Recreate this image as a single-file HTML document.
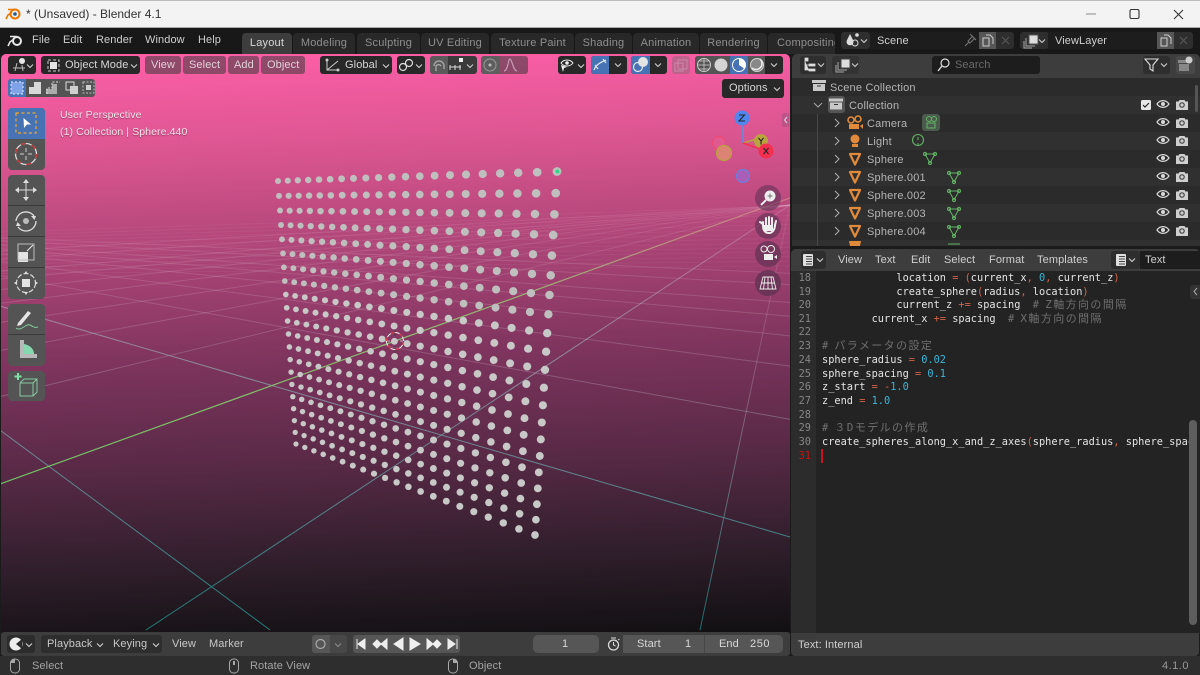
<!DOCTYPE html>
<html><head><meta charset="utf-8"><style>
*{box-sizing:border-box}
html,body{margin:0;padding:0}
body{width:1200px;height:675px;overflow:hidden;position:relative;background:#1b1b1b;font-family:"Liberation Sans","Noto Sans CJK JP",sans-serif;font-size:11px;color:#d0d0d0}
.b{position:absolute}
.t{position:absolute;white-space:nowrap;line-height:14px;letter-spacing:.1px}
.h{background:#282828;border-radius:3px;position:absolute}
.m{background:rgba(56,56,56,.55);border-radius:3px;position:absolute}
.tab{position:absolute;top:33px;height:21px;background:#282828;border-radius:4px 4px 0 0;color:#8f8f8f;line-height:20px;text-align:center;white-space:nowrap;overflow:hidden;letter-spacing:.2px}
.code{position:absolute;left:822px;font-family:"DejaVu Sans Mono","Noto Sans CJK JP",monospace;font-size:10.3px;line-height:14px;white-space:pre;color:#e4e4e4}
.n{position:absolute;left:791px;width:20px;text-align:right;font-family:"DejaVu Sans Mono",monospace;font-size:10.3px;line-height:14px;color:#858585}
.o{color:#d0634a}.v{color:#3cb4d8}.c{color:#6f6f6f}
.j{font-size:11px;letter-spacing:1.4px}
.ot{position:absolute;font-size:11px;line-height:14px;color:#b4b4b4;white-space:nowrap;letter-spacing:.2px}
.tool{position:absolute;left:8px;width:37px;background:#545454;border-radius:4px}
</style></head><body>

<!-- title bar -->
<div class="b" style="left:0;top:0;width:1200px;height:28px;background:#f3f3f3;border-top:1px solid #bdbdbd;border-bottom:1px solid #aaa"></div>
<div class="t" style="left:26px;top:7px;color:#333;font-size:12px;letter-spacing:0">* (Unsaved) - Blender 4.1</div>

<!-- top bar -->
<div class="b" style="left:0;top:28px;width:1200px;height:27px;background:#181818"></div>
<div class="t" style="left:32px;top:33px;color:#cfcfcf">File</div>
<div class="t" style="left:63px;top:33px;color:#cfcfcf">Edit</div>
<div class="t" style="left:96px;top:33px;color:#cfcfcf">Render</div>
<div class="t" style="left:145px;top:33px;color:#cfcfcf">Window</div>
<div class="t" style="left:198px;top:33px;color:#cfcfcf">Help</div>
<div class="tab" style="left:242px;width:50px;background:#3d3d3d;color:#d8d8d8">Layout</div>
<div class="tab" style="left:293px;width:62px">Modeling</div>
<div class="tab" style="left:357px;width:63px">Sculpting</div>
<div class="tab" style="left:421px;width:68px">UV Editing</div>
<div class="tab" style="left:491px;width:83px">Texture Paint</div>
<div class="tab" style="left:575px;width:57px">Shading</div>
<div class="tab" style="left:633px;width:66px">Animation</div>
<div class="tab" style="left:700px;width:67px">Rendering</div>
<div class="tab" style="left:768px;width:67px;text-align:left;padding-left:9px">Compositing</div>

<div class="h" style="left:841px;top:32px;width:29px;height:17px;background:#2e2e2e"></div>
<div class="b" style="left:870px;top:32px;width:109px;height:17px;background:#1d1d1d"></div>
<div class="b" style="left:979px;top:32px;width:17px;height:17px;background:#565656"></div>
<div class="b" style="left:996px;top:32px;width:18px;height:17px;background:#2e2e2e;border-radius:0 3px 3px 0"></div>
<div class="t" style="left:877px;top:34px;color:#d0d0d0">Scene</div>
<div class="h" style="left:1020px;top:32px;width:29px;height:17px;background:#2e2e2e"></div>
<div class="b" style="left:1048px;top:32px;width:109px;height:17px;background:#1d1d1d"></div>
<div class="b" style="left:1157px;top:32px;width:17px;height:17px;background:#565656"></div>
<div class="b" style="left:1174px;top:32px;width:19px;height:17px;background:#2e2e2e;border-radius:0 3px 3px 0"></div>
<div class="t" style="left:1055px;top:34px;color:#d0d0d0">ViewLayer</div>

<!-- 3D viewport -->
<div class="b" style="left:1px;top:54px;width:789px;height:578px;border-radius:5px 5px 0 0;overflow:hidden;background:linear-gradient(178deg,#ff5fa9 0%,#d9558f 18%,#80355f 51%,#5a2a47 68.5%,#2f1e2b 86%,#111012 100%)"></div>
<svg id="vp" class="b" style="left:0;top:0" width="1200" height="675" viewBox="0 0 1200 675">
<defs>
<clipPath id="vc"><rect x="1" y="54" width="789" height="578"/></clipPath>
<linearGradient id="lg" gradientUnits="userSpaceOnUse" x1="0" y1="210" x2="0" y2="632"><stop offset="0" stop-color="#fff" stop-opacity=".07"/><stop offset=".35" stop-color="#e4dde2" stop-opacity=".2"/><stop offset="1" stop-color="#1f8080" stop-opacity=".8"/></linearGradient>
<linearGradient id="tg" gradientUnits="userSpaceOnUse" x1="0" y1="210" x2="0" y2="632"><stop offset="0" stop-color="#d8b8cc" stop-opacity=".3"/><stop offset=".4" stop-color="#8a9aa5" stop-opacity=".85"/><stop offset="1" stop-color="#1f7c7c"/></linearGradient>
<linearGradient id="gg" gradientUnits="userSpaceOnUse" x1="790" y1="198" x2="0" y2="484"><stop offset="0" stop-color="#e0b090" stop-opacity=".45"/><stop offset=".35" stop-color="#96bd72" stop-opacity=".95"/><stop offset="1" stop-color="#72c466"/></linearGradient>
</defs>
<g id="grid" clip-path="url(#vc)"></g>
<g id="dots" clip-path="url(#vc)"></g>
</svg>

<!-- viewport header -->
<div class="h" style="left:8px;top:56px;width:28px;height:18px"></div>
<div class="h" style="left:41px;top:56px;width:99px;height:18px"></div>
<div class="t" style="left:65px;top:58px;color:#d6d6d6">Object Mode</div>
<div class="m" style="left:145px;top:56px;width:36px;height:18px"></div><div class="t" style="left:151px;top:58px;color:#e0d0d8">View</div>
<div class="m" style="left:183px;top:56px;width:43px;height:18px"></div><div class="t" style="left:189px;top:58px;color:#e0d0d8">Select</div>
<div class="m" style="left:228px;top:56px;width:31px;height:18px"></div><div class="t" style="left:234px;top:58px;color:#e0d0d8">Add</div>
<div class="m" style="left:261px;top:56px;width:44px;height:18px"></div><div class="t" style="left:267px;top:58px;color:#e0d0d8">Object</div>
<div class="h" style="left:320px;top:56px;width:72px;height:18px"></div>
<div class="t" style="left:345px;top:58px;color:#d6d6d6">Global</div>
<div class="h" style="left:397px;top:56px;width:28px;height:18px"></div>
<div class="h" style="left:430px;top:56px;width:47px;height:18px;background:#3a3a3a"></div>
<div class="h" style="left:430px;top:56px;width:18px;height:18px;background:#5a5a5a;border-radius:3px 0 0 3px"></div>
<div class="m" style="left:481px;top:56px;width:47px;height:18px"></div>
<div class="h" style="left:481px;top:56px;width:19px;height:18px;background:#5e5e5e;border-radius:3px 0 0 3px"></div>
<div class="h" style="left:558px;top:56px;width:28px;height:18px"></div>
<div class="h" style="left:591px;top:56px;width:36px;height:18px"></div>
<div class="h" style="left:591px;top:56px;width:18px;height:18px;background:#4772b3;border-radius:3px 0 0 3px"></div>
<div class="h" style="left:631px;top:56px;width:36px;height:18px"></div>
<div class="h" style="left:631px;top:56px;width:19px;height:18px;background:#4772b3;border-radius:3px 0 0 3px"></div>
<div class="m" style="left:672px;top:56px;width:18px;height:18px;background:rgba(110,110,110,.4)"></div>
<div class="h" style="left:695px;top:56px;width:88px;height:18px"></div>
<div class="h" style="left:695px;top:56px;width:70px;height:18px;background:#555;border-radius:3px 0 0 3px"></div>
<div class="b" style="left:730px;top:56px;width:18px;height:18px;background:#4772b3"></div>
<div class="h" style="left:722px;top:79px;width:62px;height:19px"></div>
<div class="t" style="left:729px;top:81px;color:#d6d6d6">Options</div>

<!-- select mode row -->
<div class="h" style="left:8px;top:79px;width:87px;height:18px;background:#545454"></div>
<div class="h" style="left:8px;top:79px;width:18px;height:18px;background:#4772b3;border-radius:3px 0 0 3px"></div>

<div class="t" style="left:60px;top:108px;color:#f2e4ea;font-size:10.5px;text-shadow:0 1px 1px rgba(0,0,0,.35)">User Perspective</div>
<div class="t" style="left:60px;top:125px;color:#f2e4ea;font-size:10.5px;text-shadow:0 1px 1px rgba(0,0,0,.35)">(1) Collection | Sphere.440</div>

<!-- toolbar -->
<div class="tool" style="top:108px;height:62px"></div>
<div class="b" style="left:8px;top:108px;width:37px;height:31px;background:#4772b3;border-radius:4px 4px 0 0"></div>
<div class="tool" style="top:175px;height:124px"></div>
<div class="tool" style="top:304px;height:62px"></div>
<div class="tool" style="top:371px;height:30px"></div>
<div class="b" style="left:8px;top:205px;width:37px;height:1px;background:#3a3a3a"></div>
<div class="b" style="left:8px;top:236px;width:37px;height:1px;background:#3a3a3a"></div>
<div class="b" style="left:8px;top:267px;width:37px;height:1px;background:#3a3a3a"></div>
<div class="b" style="left:8px;top:334px;width:37px;height:1px;background:#3a3a3a"></div>

<!-- timeline -->
<div class="b" style="left:1px;top:632px;width:789px;height:24px;background:#3d3d3d;border-radius:3px"></div>
<div class="h" style="left:7px;top:635px;width:28px;height:18px;background:#2c2c2c"></div>
<div class="h" style="left:41px;top:635px;width:121px;height:18px;background:#2e2e2e"></div>
<div class="t" style="left:47px;top:637px;color:#c8c8c8">Playback</div>
<div class="t" style="left:113px;top:637px;color:#c8c8c8">Keying</div>
<div class="t" style="left:172px;top:637px;color:#c8c8c8">View</div>
<div class="t" style="left:209px;top:637px;color:#c8c8c8">Marker</div>
<div class="h" style="left:312px;top:635px;width:35px;height:18px;background:#484848"></div>
<div class="h" style="left:312px;top:635px;width:18px;height:18px;background:#565656;border-radius:3px 0 0 3px"></div>
<div class="h" style="left:353px;top:635px;width:107px;height:18px;background:#565656"></div>
<div class="h" style="left:533px;top:635px;width:66px;height:18px;background:#565656;border-radius:5px"></div>
<div class="t" style="left:562px;top:637px;color:#d8d8d8">1</div>
<div class="h" style="left:605px;top:635px;width:18px;height:18px;background:#3d3d3d"></div>
<div class="h" style="left:623px;top:635px;width:160px;height:18px;background:#565656;border-radius:0 5px 5px 0"></div>
<div class="b" style="left:704px;top:635px;width:1px;height:18px;background:#484848"></div>
<div class="t" style="left:637px;top:637px;color:#d8d8d8">Start</div>
<div class="t" style="left:685px;top:637px;color:#d8d8d8">1</div>
<div class="t" style="left:719px;top:637px;color:#d8d8d8">End</div>
<div class="t" style="left:750px;top:637px;color:#d8d8d8;letter-spacing:.6px">250</div>

<!-- status bar -->
<div class="b" style="left:0;top:656px;width:1200px;height:19px;background:#2e2e2e"></div>
<div class="t" style="left:32px;top:659px;color:#a4a4a4">Select</div>
<div class="t" style="left:250px;top:659px;color:#a4a4a4">Rotate View</div>
<div class="t" style="left:469px;top:659px;color:#a4a4a4">Object</div>
<div class="t" style="left:1162px;top:659px;color:#9a9a9a;letter-spacing:.5px">4.1.0</div>

<!-- outliner -->
<div class="b" style="left:792px;top:54px;width:408px;height:192px;background:#2b2b2b;border-radius:5px 5px 0 0;overflow:hidden">
<div class="b" style="left:0;top:0;width:408px;height:24px;background:#3d3d3d"></div>
<div class="b" style="left:0;top:24px;width:408px;height:18px;background:#2b2b2b"></div>
<div class="b" style="left:0;top:42px;width:408px;height:18px;background:#303030"></div>
<div class="b" style="left:0;top:78px;width:408px;height:18px;background:#303030"></div>
<div class="b" style="left:0;top:114px;width:408px;height:18px;background:#303030"></div>
<div class="b" style="left:0;top:150px;width:408px;height:18px;background:#303030"></div>
<div class="b" style="left:0;top:186px;width:408px;height:6px;background:#303030"></div>
<div class="b" style="left:25px;top:60px;width:1px;height:132px;background:#484848"></div>
</div>
<div class="h" style="left:800px;top:56px;width:26px;height:18px;background:#2e2e2e"></div>
<div class="h" style="left:832px;top:56px;width:27px;height:18px;background:#333"></div>
<div class="h" style="left:932px;top:56px;width:108px;height:18px;background:#1d1d1d"></div>
<div class="t" style="left:955px;top:58px;color:#6a6a6a">Search</div>
<div class="h" style="left:1143px;top:56px;width:27px;height:18px;background:#2e2e2e"></div>
<div class="h" style="left:1176px;top:56px;width:19px;height:18px;background:#494949"></div>
<div class="b" style="left:1195px;top:85px;width:3px;height:27px;background:#555;border-radius:2px"></div>

<div class="ot" style="left:830px;top:81px">Scene Collection</div>
<div class="ot" style="left:849px;top:99px">Collection</div>
<div class="ot" style="left:867px;top:117px">Camera</div>
<div class="ot" style="left:867px;top:135px">Light</div>
<div class="ot" style="left:867px;top:153px">Sphere</div>
<div class="ot" style="left:867px;top:171px">Sphere.001</div>
<div class="ot" style="left:867px;top:189px">Sphere.002</div>
<div class="ot" style="left:867px;top:207px">Sphere.003</div>
<div class="ot" style="left:867px;top:225px">Sphere.004</div>

<!-- text editor -->
<div class="b" style="left:791px;top:249px;width:409px;height:384px;background:#232323;border-radius:5px 5px 0 0;overflow:hidden">
<div class="b" style="left:0;top:0;width:409px;height:22px;background:#3d3d3d"></div>
<div class="b" style="left:0;top:22px;width:25px;height:362px;background:#2c2c2c"></div>
</div>
<div class="h" style="left:801px;top:251px;width:25px;height:18px;background:#2e2e2e"></div>
<div class="t" style="left:838px;top:253px;color:#cfcfcf">View</div>
<div class="t" style="left:875px;top:253px;color:#cfcfcf">Text</div>
<div class="t" style="left:911px;top:253px;color:#cfcfcf">Edit</div>
<div class="t" style="left:944px;top:253px;color:#cfcfcf">Select</div>
<div class="t" style="left:989px;top:253px;color:#cfcfcf">Format</div>
<div class="t" style="left:1037px;top:253px;color:#cfcfcf">Templates</div>
<div class="h" style="left:1111px;top:251px;width:29px;height:18px;background:#2e2e2e"></div>
<div class="b" style="left:1140px;top:251px;width:60px;height:18px;background:#1d1d1d"></div>
<div class="t" style="left:1145px;top:253px;color:#d0d0d0">Text</div>

<div class="b" style="left:791px;top:271px;width:399px;height:362px;overflow:hidden" id="codeclip">
<div style="position:absolute;left:-791px;top:-271px;width:1200px;height:675px">
<div class="n" style="top:271px">18</div><div class="code" style="top:271px">            location <span class="o">=</span> <span class="o">(</span>current_x<span class="o">,</span> <span class="v">0</span><span class="o">,</span> current_z<span class="o">)</span></div>
<div class="n" style="top:285px">19</div><div class="code" style="top:285px">            create_sphere<span class="o">(</span>radius<span class="o">,</span> location<span class="o">)</span></div>
<div class="n" style="top:298px">20</div><div class="code" style="top:298px">            current_z <span class="o">+=</span> spacing  <span class="c"># <span class="j">Z軸方向の間隔</span></span></div>
<div class="n" style="top:312px">21</div><div class="code" style="top:312px">        current_x <span class="o">+=</span> spacing  <span class="c"># <span class="j">X軸方向の間隔</span></span></div>
<div class="n" style="top:325px">22</div>
<div class="n" style="top:339px">23</div><div class="code" style="top:339px"><span class="c"># <span class="j">パラメータの設定</span></span></div>
<div class="n" style="top:353px">24</div><div class="code" style="top:353px">sphere_radius <span class="o">=</span> <span class="v">0.02</span></div>
<div class="n" style="top:367px">25</div><div class="code" style="top:367px">sphere_spacing <span class="o">=</span> <span class="v">0.1</span></div>
<div class="n" style="top:380px">26</div><div class="code" style="top:380px">z_start <span class="o">=</span> <span class="v"><span class="o">-</span>1.0</span></div>
<div class="n" style="top:394px">27</div><div class="code" style="top:394px">z_end <span class="o">=</span> <span class="v">1.0</span></div>
<div class="n" style="top:408px">28</div>
<div class="n" style="top:421px">29</div><div class="code" style="top:421px"><span class="c"># <span class="j">３Dモデルの作成</span></span></div>
<div class="n" style="top:435px">30</div><div class="code" style="top:435px">create_spheres_along_x_and_z_axes<span class="o">(</span>sphere_radius<span class="o">,</span> sphere_spacing<span class="o">,</span> z_start<span class="o">,</span> z_end<span class="o">)</span></div>
<div class="n" style="top:449px;color:#c81414">31</div>
<div class="b" style="left:821px;top:449px;width:2px;height:14px;background:#c81414"></div>
</div></div>
<div class="b" style="left:1189px;top:420px;width:8px;height:205px;background:#5e5e5e;border-radius:4px"></div>
<div class="b" style="left:1190px;top:285px;width:10px;height:14px;background:#333;border-radius:3px 0 0 3px"></div>

<div class="b" style="left:791px;top:633px;width:408px;height:23px;background:#3d3d3d;border-radius:0 0 4px 4px"></div>
<div class="t" style="left:798px;top:638px;color:#d0d0d0">Text: Internal</div>

<!-- icons -->
<svg class="b" style="left:0;top:0" width="1200" height="675" viewBox="0 0 1200 675" fill="none">
<defs>
<g id="eye"><path d="M-6 0C-3-4.500 3-4.500 6 0C3 4.500-3 4.500-6 0Z" stroke="#d8d8d8" stroke-width="1.2"/><circle r="2" fill="#d8d8d8"/></g>
<g id="rc"><path d="M-6-3.500h2.500l1-1.500h5l1 1.500H6V5H-6Z" fill="#cfcfcf"/><circle r="2.800" fill="#444"/><circle r="1.600" fill="#cfcfcf"/></g>
<g id="tri"><path d="M-5-5H5L0 5.500Z" stroke="#e08a3c" stroke-width="2.200" stroke-linejoin="round"/></g>
<g id="dat"><path d="M-5-4H5L0 5Z" stroke="#62b565" stroke-width="1"/><circle cx="-5" cy="-4" r="1.600" stroke="#62b565"/><circle cx="5" cy="-4" r="1.600" stroke="#62b565"/><circle cx="0" cy="5" r="1.600" stroke="#62b565"/></g>
<g id="chr"><path d="M-2-4L2 0L-2 4" stroke="#b0b0b0" stroke-width="1"/></g>
<g id="dn"><path d="M-3-1.500L0 1.500L3-1.500" stroke="#d0d0d0" stroke-width="1.100"/></g>
<g id="ms"><rect x="-4.500" y="-7" width="9" height="14" rx="4" stroke="#a8a8a8"/></g>
<g id="book"><rect x="-5" y="-6" width="10" height="12" rx="1" fill="#e0e0e0"/><path d="M-2-3.500H4M-2-1H4M-2 1.500H4M-2 4H4" stroke="#444"/></g>
<g id="box"><path d="M-7-6h14v3h-14ZM-6-2h12v7h-12Z" fill="#c8c8c8"/><path d="M-2 0h4" stroke="#333"/></g>
<g id="copy"><path d="M-4-3h6v8h-6ZM-1-6h4l3 3v6" stroke="#cfcfcf"/></g>
</defs>

<!-- title bar icons -->
<circle cx="15" cy="14" r="4.500" stroke="#ea7600" stroke-width="2"/><circle cx="15" cy="14" r="1.800" fill="#265787"/><path d="M15 9.500H8M12 12L8 15L6 19" stroke="#ea7600" stroke-width="1.600"/>
<path d="M1086 14h10" stroke="#888" stroke-width="1"/>
<rect x="1130" y="9.500" width="9" height="9" rx="1.500" stroke="#333" stroke-width="1.100"/>
<path d="M1174 10l9 9M1183 10l-9 9" stroke="#333" stroke-width="1.100"/>

<!-- blender logo top bar -->
<circle cx="17" cy="41" r="4" stroke="#e8e8e8" stroke-width="2"/><path d="M17 36.500H10M14 39L10 42L8 46" stroke="#e8e8e8" stroke-width="1.600"/>

<!-- scene bar -->
<path d="M850 34l3 6a3.500 3.500 0 1 1-6 0Z" fill="#ddd"/><circle cx="857" cy="35" r="1.800" fill="#ddd"/><circle cx="855" cy="43" r="3" stroke="#ddd"/><use href="#dn" x="864" y="41"/>
<path d="M973 36l-5 5 2 2 5-5M965 46l4-4" stroke="#777" stroke-width="1"/><path d="M970 34l6 6" stroke="#777"/>
<use href="#copy" x="987" y="41"/><path d="M1002 37l7 7M1009 37l-7 7" stroke="#5a5a5a" stroke-width="1"/>
<rect x="1029" y="35" width="9" height="9" fill="#ddd" stroke="#555"/><path d="M1026 38v8h9M1024 41v7h8" stroke="#aaa"/><use href="#dn" x="1042" y="41"/>
<use href="#copy" x="1165" y="41"/><path d="M1180 37l7 7M1187 37l-7 7" stroke="#5a5a5a" stroke-width="1"/>

<!-- viewport header icons -->
<circle cx="22" cy="61" r="3" fill="#e8e8e8"/><path d="M13 68h12M17 63l-2 8M22 65l1 6" stroke="#bbb" stroke-width="1"/><use href="#dn" x="30" y="66"/>
<rect x="48" y="60" width="11" height="11" stroke="#ccc" stroke-dasharray="3 2"/><rect x="50" y="62" width="7" height="7" fill="#e4e4e4"/><use href="#dn" x="134" y="66"/>
<path d="M327 59v11h11M327 70l11-9" stroke="#ccc"/><circle cx="327" cy="60" r="1.500" fill="#ccc"/><circle cx="338" cy="70" r="1.500" fill="#ccc"/><use href="#dn" x="386" y="66"/>
<circle cx="403" cy="67" r="3.500" stroke="#ddd" stroke-width="1.200"/><circle cx="409" cy="63" r="3.500" stroke="#ddd" stroke-width="1.200"/><use href="#dn" x="419" y="66"/>
<path d="M434 66a5 5 0 0 1 10 0v3M436 71v-5a3 3 0 0 1 5 0" stroke="#aaa" stroke-width="1.300"/>
<path d="M450 67h11M450 65v5M455 65v5M460 65v5" stroke="#ddd"/><rect x="459" y="58" width="4" height="4" fill="#eee"/><use href="#dn" x="470" y="66"/>
<circle cx="490" cy="65" r="6" stroke="#999"/><circle cx="490" cy="65" r="1.500" fill="#bbb"/>
<path d="M504 71c4 0 4-12 6-12s3 12 7 12" stroke="#c79ab5" stroke-width="1.200"/>
<path d="M561 63c3-4 9-4 12 0c-3 4-9 4-12 0Z" stroke="#eee"/><circle cx="567" cy="63" r="1.800" fill="#eee"/><path d="M561 65l6 2-3 1-1 4Z" fill="#eee"/><use href="#dn" x="581" y="66"/>
<path d="M594 70C596 64 602 62 606 60M595 65l3 4M603 59l3 4" stroke="#e0e6f0" stroke-width="1.200"/><use href="#dn" x="618" y="65"/>
<circle cx="643" cy="62" r="5" fill="#e4e4e4"/><circle cx="638" cy="67" r="4.500" stroke="#e4e4e4" stroke-width="1.200"/><use href="#dn" x="658" y="65"/>
<rect x="675" y="63" width="8" height="8" stroke="#c88aa8"/><rect x="678" y="60" width="9" height="9" stroke="#c88aa8"/>
<circle cx="704" cy="65" r="6.500" stroke="#ccc"/><path d="M697.500 65h13M704 58.500v13M699 61h10M699 69h10" stroke="#ccc" stroke-width=".8"/>
<circle cx="721" cy="65" r="6.500" fill="#d4d4d4"/>
<circle cx="739" cy="65" r="6.500" fill="#fff"/><path d="M739 58.500a6.500 6.500 0 0 0-6.500 6.500 6.500 6.500 0 0 0 6.500 6.500 6 6 0 0 0 5-3l-5-3.500Z" fill="#4772b3"/><circle cx="739" cy="65" r="6.500" stroke="#fff"/>
<circle cx="757" cy="65" r="6.500" fill="#888" stroke="#d4d4d4"/><path d="M752 68a6 6 0 0 0 8-9" stroke="#eee" stroke-width="1.500"/><use href="#dn" x="774" y="65"/>
<use href="#dn" x="777" y="89"/>

<!-- select mode icons -->
<g transform="translate(0,-1)">
<rect x="11" y="83" width="12" height="12" fill="#7fa3e6" stroke="#e8eefc" stroke-dasharray="2 2"/>
<path d="M29 95V88h5v-5h7v12Z" fill="#d8d8d8"/><path d="M46 90h6v-5h5v10H46Z" fill="#d0d0d0" opacity=".7"/><path d="M47 95v-6h5v-6h8" stroke="#ddd" stroke-dasharray="2 1.500"/>
<rect x="66" y="83" width="8" height="8" stroke="#ddd"/><rect x="70" y="87" width="8" height="8" fill="#d0d0d0"/>
<rect x="83" y="83" width="11" height="11" stroke="#bbb" stroke-dasharray="2 1.500"/><rect x="86" y="86" width="5" height="5" fill="#d0d0d0"/>
</g>

<!-- arrow tab -->
<rect x="782" y="113" width="7" height="14" rx="2" fill="#a85080" opacity=".6"/><path d="M787 117l-2.500 3 2.500 3" stroke="#ddd"/>

<!-- gizmo -->
<path d="M743 143V125" stroke="#5c8ce8" stroke-width="1.500"/><path d="M743 143L757 139" stroke="#b9a33f" stroke-width="1.500"/><path d="M743 143L760 149" stroke="#f5304f" stroke-width="1.500"/>
<circle cx="719" cy="143" r="6.500" fill="#e05a90" stroke="#ee4a72" stroke-width="1.200"/>
<circle cx="724" cy="153" r="7.500" fill="#dc8474" stroke="#b9a33f" stroke-width="1.200"/>
<circle cx="743" cy="176" r="6.500" fill="#a95fb8" stroke="#6a7fdc" stroke-width="1.200"/>
<circle cx="742" cy="118" r="7.500" fill="#4f86ef"/><circle cx="761" cy="141" r="7" fill="#b9a33f"/><circle cx="766" cy="151" r="7.500" fill="#f5304f"/>
<path d="M739 115h5.500l-5.500 6h6M758.500 138l2.500 3 2.500-3M761 141v3.500M763.500 148l5 6M768.500 148l-5 6" stroke="#25252a" stroke-width="1.100"/>

<!-- nav buttons -->
<circle cx="768" cy="198" r="13" fill="#5a3050" opacity=".55"/><circle cx="768" cy="226" r="13" fill="#5a3050" opacity=".6"/><circle cx="768" cy="254" r="13" fill="#5a3050" opacity=".65"/><circle cx="768" cy="283" r="13" fill="#5a3050" opacity=".7"/>
<circle cx="770" cy="196" r="5.500" fill="#eee"/><path d="M770 193.500v5M767.500 196h5" stroke="#777"/><path d="M766 200l-5 5" stroke="#eee" stroke-width="2"/>
<path d="M763 226v-4M766 226v-8M769 226v-9M772 226v-8M763 224l-3-2M763 226c0 5 3 7 6 7s6-3 6-8l1-4" stroke="#eee" stroke-width="2" stroke-linecap="round"/><path d="M764 225h9v6h-9Z" fill="#eee"/>
<circle cx="764" cy="249" r="3" stroke="#eee"/><circle cx="771" cy="249" r="3.500" stroke="#eee"/><rect x="764" y="254" width="9" height="6" fill="#eee"/><path d="M774 257l3-2v4Z" fill="#eee"/>
<path d="M763 277h10l3 12h-16ZM768 277v12M761.500 283h13M765 277l-1.500 12M771 277l1.500 12" stroke="#eee" stroke-width=".9"/>

<!-- tools -->
<rect x="16" y="113" width="20" height="20" stroke="#f0a830" stroke-dasharray="3 2.500" stroke-width="1.200"/><path d="M23.500 118L31 124.500H27L24 128Z" fill="#fff"/>
<circle cx="26" cy="154" r="10.500" stroke="#ddd" stroke-width="1.300"/><circle cx="26" cy="154" r="10.500" stroke="#c83030" stroke-width="1.300" stroke-dasharray="5 6"/><path d="M26 148v4M26 156v4M20 154h4M28 154h4" stroke="#ccc"/>
<path d="M26 182v16M18 190h16" stroke="#ddd"/><path d="M26 179l-3 4h6ZM26 201l-3-4h6ZM15 190l4-3v6ZM37 190l-4-3v6Z" fill="#ddd"/>
<circle cx="26" cy="221" r="3" fill="#bbb"/><path d="M16 221a10 10 0 0 1 18-5M36 221a10 10 0 0 1-18 6" stroke="#ddd" stroke-width="1.300"/><path d="M36 216h-5l3.500 4ZM16 226h5l-3.500-4Z" fill="#ddd"/>
<rect x="18" y="252" width="10" height="10" fill="#e4e4e4"/><rect x="18" y="244" width="16" height="16" stroke="#bbb"/><path d="M27 251l6-6" stroke="#eee"/>
<circle cx="26" cy="283" r="9.500" stroke="#ddd" stroke-width="1.200" stroke-dasharray="5 2"/><rect x="22" y="279" width="8" height="8" fill="#e4e4e4"/><path d="M26 271l-2 3h4ZM26 295l-2-3h4ZM14 283l3-2v4ZM38 283l-3-2v4Z" fill="#ddd"/>
<path d="M18 323l10-12 3 2-10 12-4 1Z" fill="#e4e4e4"/><path d="M16 328c5 4 10-5 14-3s4 3 8 2" stroke="#7fcf9f" stroke-width="1"/>
<path d="M20 340h4v18H20ZM20 354h17v4H20Z" fill="#b8b8b8"/><path d="M24 344a13 10 0 0 1 10 10H24Z" fill="#86d9ae"/>
<rect x="20" y="383" width="13" height="13" stroke="#86c9a0"/><path d="M20 383l4-4h13v13l-4 4M33 383l4-4" stroke="#86c9a0"/><path d="M18 373v7M14.500 376.500h7" stroke="#7fe0a5" stroke-width="2"/>

<!-- outliner icons -->
<path d="M805 58h3v3h-3ZM809 64h6v2h-6ZM809 69h6v2h-6ZM805 61v9h4M805 65h4" stroke="#ddd" fill="#ddd" stroke-width=".8"/><use href="#dn" x="821" y="65"/>
<rect x="841" y="59" width="9" height="9" fill="#ddd" stroke="#444"/><path d="M838 62v8h9M836 65v7h8" stroke="#aaa"/><use href="#dn" x="855" y="65"/>
<circle cx="945" cy="63" r="4" stroke="#ddd" stroke-width="1.200"/><path d="M942 66l-4 5" stroke="#ddd" stroke-width="1.400"/>
<path d="M1145 59h13l-5 6v6l-3-2v-4Z" stroke="#ddd" stroke-width="1.100"/><use href="#dn" x="1164" y="65"/>
<path d="M1178 60h11v3h-11ZM1179 64h10v7h-10Z" fill="#888"/><circle cx="1189" cy="60" r="3.500" fill="#ccc"/>
<use href="#box" x="819" y="86"/>
<path d="M814 103l4 4 4-4" stroke="#a8a8a8"/>
<rect x="828" y="96" width="17" height="17" rx="3" fill="#555"/><use href="#box" x="836" y="104.500"/>
<use href="#chr" x="837" y="123"/><use href="#chr" x="837" y="141"/><use href="#chr" x="837" y="159"/><use href="#chr" x="837" y="177"/><use href="#chr" x="837" y="195"/><use href="#chr" x="837" y="213"/><use href="#chr" x="837" y="231"/>
<circle cx="851" cy="120" r="3" stroke="#e08a3c" stroke-width="1.600"/><circle cx="858" cy="119" r="3" stroke="#e08a3c" stroke-width="1.600"/><rect x="849" y="124" width="10" height="5" fill="#e08a3c"/><path d="M860 126l3-2v5Z" fill="#e08a3c"/>
<circle cx="855" cy="139" r="4.500" fill="#e08a3c"/><rect x="852" y="144" width="6" height="3" fill="#e08a3c"/>
<use href="#tri" x="855" y="159"/><use href="#tri" x="855" y="177"/><use href="#tri" x="855" y="195"/><use href="#tri" x="855" y="213"/><use href="#tri" x="855" y="231"/>
<path d="M849 241h12l-1 5h-10Z" fill="#e08a3c"/>
<rect x="922" y="114" width="18" height="17" rx="3" fill="#4a5a4d"/><circle cx="929" cy="119" r="2.500" stroke="#62b565"/><circle cx="934" cy="119" r="2.500" stroke="#62b565"/><rect x="927" y="123" width="8" height="5" stroke="#62b565"/>
<circle cx="918" cy="140" r="5.500" stroke="#62b565" stroke-width="1.100"/><path d="M918 137v3" stroke="#62b565"/><circle cx="918" cy="144" r=".8" fill="#62b565"/>
<use href="#dat" x="930" y="158"/><use href="#dat" x="954" y="177"/><use href="#dat" x="954" y="195"/><use href="#dat" x="954" y="213"/><use href="#dat" x="954" y="231"/>
<path d="M948 244h12" stroke="#62b565"/>
<rect x="1141" y="100" width="10" height="10" rx="1.500" fill="#e6e6e6"/><path d="M1143 105l2 2 4-4" stroke="#222" stroke-width="1.200"/>
<use href="#eye" x="1163" y="104"/><use href="#rc" x="1182" y="105"/>
<use href="#eye" x="1163" y="122"/><use href="#rc" x="1182" y="123"/>
<use href="#eye" x="1163" y="140"/><use href="#rc" x="1182" y="141"/>
<use href="#eye" x="1163" y="158"/><use href="#rc" x="1182" y="159"/>
<use href="#eye" x="1163" y="176"/><use href="#rc" x="1182" y="177"/>
<use href="#eye" x="1163" y="194"/><use href="#rc" x="1182" y="195"/>
<use href="#eye" x="1163" y="212"/><use href="#rc" x="1182" y="213"/>
<use href="#eye" x="1163" y="230"/><use href="#rc" x="1182" y="231"/>

<!-- text editor icons -->
<use href="#book" x="808" y="260"/><use href="#dn" x="820" y="260"/>
<use href="#book" x="1121" y="260"/><use href="#dn" x="1132" y="260"/>
<path d="M1197 288l-3 3.500 3 3.500" stroke="#aaa"/>

<!-- timeline icons -->
<circle cx="16" cy="644" r="6.500" fill="#eee"/><path d="M16 644l6-5v10Z" fill="#2c2c2c"/><use href="#dn" x="29" y="645"/>
<use href="#dn" x="100" y="645"/><use href="#dn" x="156" y="645"/>
<circle cx="320.500" cy="644" r="4.500" stroke="#aaa" stroke-width="1.200"/><use href="#dn" x="338" y="645" opacity=".5"/>
<path d="M357 639v10M365 639v10l-7-5ZM373 644l4-4 4 4-4 4ZM387 639v10l-6-5ZM403 638v12l-9-6ZM410 638l10 6-10 6ZM427 639v10l6-5ZM433 644l4-4 4 4-4 4ZM448 639l7 5-7 5ZM457 639v10" fill="#eee" stroke="#eee"/>
<circle cx="613.500" cy="645" r="5" stroke="#ddd" stroke-width="1.200"/><path d="M613.500 642v3l2 1M611 638h5M618 640l1.500-1" stroke="#ddd"/>

<!-- status icons -->
<use href="#ms" x="15" y="666"/><path d="M15 659h-1a3.500 3.500 0 0 0-3.500 4H15Z" fill="#a8a8a8"/>
<use href="#ms" x="234" y="666"/><rect x="233" y="661" width="2" height="4" fill="#a8a8a8"/>
<use href="#ms" x="453" y="666"/><path d="M453 659h1a3.500 3.500 0 0 1 3.500 4H453Z" fill="#a8a8a8"/>
</svg>

<script>
(function(){
var NS="http://www.w3.org/2000/svg";
function el(n,a,p){var e=document.createElementNS(NS,n);for(var k in a)e.setAttribute(k,a[k]);p.appendChild(e);return e;}
var g=document.getElementById("grid"),d=document.getElementById("dots");
function line(x1,y1,x2,y2,s,w){el("line",{x1:x1,y1:y1,x2:x2,y2:y2,stroke:s,"stroke-width":w||1},g);}
var v1=[790,205],v2=[-277,225],i;
// family towards right vanishing point
var xs=[700,146,-962,-1516,-2070,-2624,-3178,-3732,-4286,-5394,-6502];
for(i=0;i<xs.length;i++){line(v1[0],v1[1],xs[i],630,xs[i]==146?"url(#tg)":"url(#lg)",1);}
// family towards left vanishing point
var ys=[270,1108,1946,2784,3622,4460,5298,6974,8650];
for(i=0;i<ys.length;i++){line(v2[0],v2[1],ys[i],630,i<2?"url(#tg)":"url(#lg)",1);}
// faint horizon fan
for(i=0;i<14;i++){line(0,232+i*3.2,790,206+i*4.6,"rgba(255,255,255,.06)",.7);}
// green axis
line(0,484,790,198,"url(#gg)",1.2);
// sphere grid (homography from the four corner spheres)
var x0=278,y0=181,x1=557,y1=171.5,x2=535,y2=535,x3=296,y3=444;
var dx1=x1-x2,dx2=x3-x2,sx=x0-x1+x2-x3,dy1=y1-y2,dy2=y3-y2,sy=y0-y1+y2-y3;
var den=dx1*dy2-dx2*dy1,G=(sx*dy2-dx2*sy)/den,H=(dx1*sy-sx*dy1)/den;
var a=x1-x0+G*x1,b=x3-x0+H*x3,c=x0,e=y1-y0+G*y1,f=y3-y0+H*y3,h=y0;
for(var r=0;r<21;r++)for(var q=0;q<21;q++){
 var u=q/20,v=r/20,w=G*u+H*v+1,X=(a*u+b*v+c)/w,Y=(e*u+f*v+h)/w;
 var R=(3+1.4*u)*(1-.13*v);
 el("circle",{cx:X.toFixed(1),cy:Y.toFixed(1),r:R.toFixed(2),fill:r<8?"#bfbfbf":"#c8c8c8"},d);
}
// active sphere and 3D cursor
el("circle",{cx:557.5,cy:171.5,r:3.6,fill:"#b0c4b8"},d);
el("circle",{cx:557.5,cy:171.5,r:1.8,fill:"#2fd68a"},d);
el("circle",{cx:395,cy:341,r:8.5,fill:"none",stroke:"#eee","stroke-width":1},d);
el("circle",{cx:395,cy:341,r:8.5,fill:"none",stroke:"#d8202c","stroke-width":1,"stroke-dasharray":"4 4.9"},d);
line(395,325,395,336,"rgba(60,60,60,.8)",1);line(395,346,395,357,"rgba(60,60,60,.8)",1);
line(382,341,390,341,"rgba(220,220,220,.7)",1);line(400,341,408,341,"rgba(220,220,220,.7)",1);
})();
</script>
</body></html>
